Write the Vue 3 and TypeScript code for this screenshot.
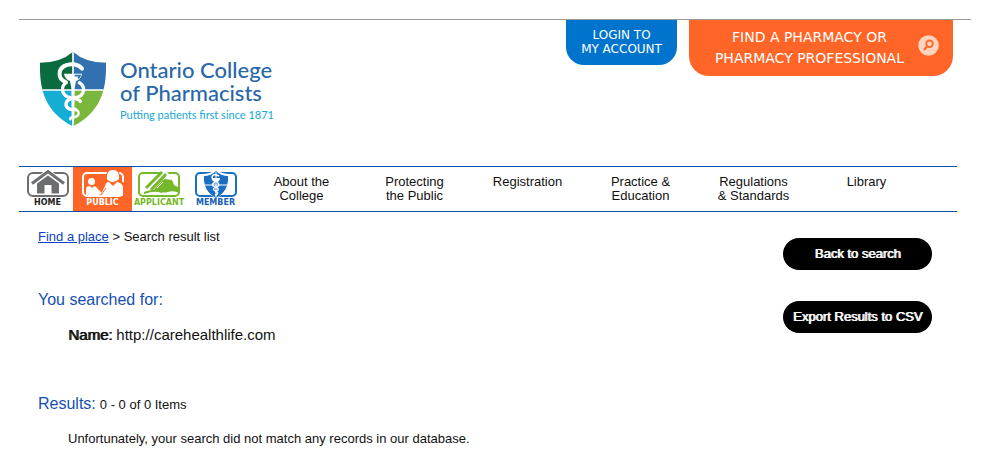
<script setup lang="ts">
interface NavLink {
  lines: string[]
}

const links: NavLink[] = [
  { lines: ['About the', 'College'] },
  { lines: ['Protecting', 'the Public'] },
  { lines: ['Registration'] },
  { lines: ['Practice &', 'Education'] },
  { lines: ['Regulations', '& Standards'] },
  { lines: ['Library'] },
]

const searchName = 'http://carehealthlife.com'
const resultRange = '0 - 0 of 0 Items'
</script>

<template>
  <div class="page">
    <header class="header">
      <a class="brand" href="#">
        <svg class="shield" viewBox="57 33 204 228" aria-hidden="true">
          <defs>
            <clipPath id="shield-shape">
              <path d="M159 35Q122 68 60 68C58 155 78 216 159 259C240 216 260 155 258 68Q196 68 159 35Z" />
            </clipPath>
          </defs>
          <g clip-path="url(#shield-shape)">
            <path fill="#0b6b40" d="M57 33h102v117H57z" />
            <path fill="#3271b0" d="M159 33h102v117H159z" />
            <path fill="#14aed5" d="M57 150h102v111H57z" />
            <path fill="#7ab73d" d="M159 150h102v111H159z" />
            <path stroke="#fff" stroke-width="5" d="M159 33v228M57 150h204" />
          </g>
          <path fill="#fff" d="M132 101H186Q184 118 168 123L164 144L163 238L159 246L155 238L154 144L150 123Q134 118 132 101Z" />
          <path fill="none" stroke="#3271b0" stroke-width="5" d="M164 107H180Q178 112 174 115" />
          <g fill="none" stroke="#fff" stroke-width="12" stroke-linecap="round">
            <path d="M186 86C176 72 154 70 141 75C112 84 112 116 137 126" />
            <path d="M178 128C197 138 194 165 173 171C158 176 138 176 138 193C138 207 154 210 166 208" stroke-width="10" />
            <path d="M139 128C122 138 124 163 144 171C156 176 178 176 181 184" stroke-width="10" />
            <path d="M166 210C182 212 177 229 164 231C152 232 149 234 151 238" stroke-width="7" />
          </g>
        </svg>
        <span class="brand-text">
          <span class="brand-name">
            <span>Ontario College</span>
            <span>of Pharmacists</span>
          </span>
          <span class="brand-tag">Putting patients first since 1871</span>
        </span>
      </a>
      <div class="tabs">
        <a class="tab login" href="#">LOGIN TO<br />MY ACCOUNT</a>
        <a class="tab find" href="#">
          <span>FIND A PHARMACY OR<br />PHARMACY PROFESSIONAL</span>
          <svg class="search" viewBox="0 0 21 21" aria-hidden="true">
            <circle cx="10.500" cy="10.500" r="10.300" fill="#ffd3be" />
            <circle cx="11.500" cy="8.800" r="3.300" fill="none" stroke="#ff6526" stroke-width="1.800" />
            <path d="M9 11.500L6 15" stroke="#ff6526" stroke-width="2.200" />
          </svg>
        </a>
      </div>
    </header>

    <nav class="nav">
      <a class="icon-link home" href="#">
        <svg viewBox="0 0 42 28" aria-hidden="true">
          <rect x="1" y="3" width="40" height="23" rx="5" fill="#fff" stroke="#6d6e70" stroke-width="2" />
          <path d="M3 13L21 -2L39 13V17H34V23H8V17H3Z" fill="#fff" />
          <path d="M5 13.500L21 1.500L37 13.500" fill="none" stroke="#6d6e70" stroke-width="3" />
          <path d="M10 13.500L21 5.500L32 13.500V23.500H24.500V15H17.500V23.500H10Z" fill="#6d6e70" />
        </svg>
        <span>HOME</span>
      </a>
      <a class="icon-link public" href="#">
        <svg viewBox="0 0 42 28" aria-hidden="true">
          <rect x="1" y="3" width="40" height="23" rx="4" fill="none" stroke="#fff" stroke-width="2" />
          <path d="M24 10Q23 0 29 -1Q39 -2 38 10L42 13V26H18Z" fill="#ff6526" />
          <circle cx="9.500" cy="11.500" r="3.500" fill="#fff" />
          <path d="M4 25V19Q4 16 8 16L10 18L12 16Q14 16 15 18L20 23L17 25Z" fill="#fff" />
          <path d="M25 9Q24 0 31 0Q38 0 37 9Q34 12 31 12Q27 12 25 9Z" fill="#fff" />
          <path d="M18 26L23 16Q24 12 27 12L31 16L35 12Q41 13 41 18V26Z" fill="#fff" />
          <path d="M24 18L19 25" stroke="#ff6526" stroke-width="1" />
        </svg>
        <span>PUBLIC</span>
      </a>
      <a class="icon-link applicant" href="#">
        <svg viewBox="0 0 42 28" aria-hidden="true">
          <rect x="1" y="3" width="40" height="23" rx="4" fill="#fff" stroke="#75b82a" stroke-width="2" />
          <path d="M19 12L27 9L34 10L36 15L42 18V23Q35 20 30 22Q23 24 14 19Z" fill="#75b82a" />
          <path d="M6 21L25 1L31 3L14 22Z" fill="#fff" />
          <path d="M8 18L24 2M13 20L28 4" stroke="#75b82a" stroke-width="3" />
          <path d="M6 23Q17 19 24 22" fill="none" stroke="#75b82a" stroke-width="2" />
          <path d="M19 18L25 12" stroke="#fff" stroke-width="1" />
        </svg>
        <span>APPLICANT</span>
      </a>
      <a class="icon-link member" href="#">
        <svg viewBox="0 0 42 28" aria-hidden="true">
          <rect x="1" y="3" width="40" height="23" rx="4" fill="#fff" stroke="#1b6ec2" stroke-width="2" />
          <path d="M21 0Q15 4 7 4Q6 22 21 28Q36 22 35 4Q27 4 21 0Z" fill="#fff" />
          <path d="M21 1Q16 6 9 6Q8 21 21 28Q34 21 33 6Q26 6 21 1Z" fill="#1b6ec2" />
          <path d="M21 2V27M9 15H33" stroke="#fff" stroke-width="1" />
          <path d="M17 8H25Q25 12 21 12Q17 12 17 8Z" fill="#fff" />
          <path d="M24 6Q18 3 17 7Q17 10 22 12Q26 15 22 17Q17 18 19 20L22 22Q24 24 20 25M20 12Q15 15 20 17Q24 18 23 20L20 22" fill="none" stroke="#fff" stroke-width="1.500" />
        </svg>
        <span>MEMBER</span>
      </a>
      <a v-for="link in links" :key="link.lines[0]" class="nav-link" href="#">
        <span v-for="line in link.lines" :key="line">{{ line }}</span>
      </a>
    </nav>

    <div class="content">
      <main class="main">
        <p class="crumbs"><a href="#">Find a place</a> &gt; Search result list</p>
        <h2 class="heading searched">You searched for:</h2>
        <p class="criteria"><strong>Name:</strong> {{ searchName }}</p>
        <div class="results">
          <h2 class="heading">Results:</h2>
          <span>{{ resultRange }}</span>
        </div>
        <p class="message">Unfortunately, your search did not match any records in our database.</p>
      </main>
      <aside class="actions">
        <button type="button">Back to search</button>
        <button type="button">Export Results to CSV</button>
      </aside>
    </div>
  </div>
</template>

<style>
body {
  background: #fff;
}
</style>

<style scoped>
.page {
  padding: 19px 19px 0;
  font-family: "Liberation Sans", Arial, sans-serif;
  font-size: 13px;
  line-height: 16px;
  color: #111;
}
a {
  color: inherit;
  text-decoration: none;
}
p,
h2 {
  margin: 0;
}
.header {
  display: flex;
  justify-content: space-between;
  align-items: flex-start;
  min-height: 146px;
  padding: 0 18px 0 20px;
  border-top: 1px solid #999;
}
.brand {
  display: flex;
  gap: 13px;
  padding-top: 31px;
}
.shield {
  width: 68px;
  height: 76px;
}
.brand-text {
  display: flex;
  flex-direction: column;
  gap: 3px;
  padding-top: 7px;
  white-space: nowrap;
}
.brand-name {
  display: flex;
  flex-direction: column;
  font-family: Lato, sans-serif;
  font-size: 22px;
  font-weight: 500;
  line-height: 23px;
  color: #2867a8;
}
.brand-tag {
  font-family: Lato, sans-serif;
  font-size: 11px;
  line-height: 16px;
  color: #17a9ce;
}
.tabs {
  display: flex;
  align-items: flex-start;
  gap: 12px;
}
.tab {
  font-family: "DejaVu Sans", Verdana, sans-serif;
  color: #fff;
  text-align: center;
  white-space: nowrap;
}
.login {
  padding: 8px 15px 9px;
  border-radius: 0 0 18px 18px;
  background: #0074cc;
  font-size: 12px;
  line-height: 14px;
}
.find {
  display: flex;
  align-items: center;
  gap: 14px;
  padding: 7px 14px 7px 26px;
  border-radius: 0 0 20px 20px;
  background: #ff6526;
  font-size: 14px;
  line-height: 21px;
}
.search {
  width: 21px;
  height: 21px;
  margin-bottom: 6px;
}
.nav {
  display: flex;
  margin-right: 14px;
  border: solid #0b4fae;
  border-width: 1px 0;
}
.icon-link {
  display: flex;
  flex: none;
  flex-direction: column;
  align-items: center;
  box-sizing: border-box;
  height: 44px;
  padding-top: 3px;
  font-family: "DejaVu Sans", Verdana, sans-serif;
  font-size: 8px;
  font-weight: bold;
  line-height: 10px;
}
.icon-link svg {
  width: 42px;
  height: 28px;
  overflow: visible;
}
.home {
  width: 54px;
  padding-left: 3px;
  color: #222;
}
.public {
  width: 59px;
  background: #ff6526;
  color: #fff;
}
.applicant {
  width: 54px;
  color: #75b82a;
}
.member {
  width: 59px;
  color: #1760b4;
}
.nav-link {
  display: flex;
  flex: 0 1 113px;
  flex-direction: column;
  align-items: center;
  padding-top: 8px;
  line-height: 14px;
  white-space: nowrap;
}
.content {
  display: flex;
  justify-content: space-between;
  margin-right: 14px;
  padding: 17px 25px 0 19px;
}
.crumbs a {
  color: #0b3fbf;
  text-decoration: underline;
}
.heading {
  font-size: 16px;
  font-weight: normal;
  line-height: 20px;
  color: #1450b4;
}
.searched {
  margin-top: 45px;
}
.criteria {
  margin: 16px 0 0 30px;
  font-size: 15px;
  line-height: 18px;
}
.criteria strong {
  font-weight: normal;
  text-shadow: 1px 0 0 currentColor;
}
.results {
  display: flex;
  align-items: baseline;
  gap: 4px;
  margin-top: 50px;
}
.message {
  margin: 17px 0 0 30px;
}
.actions {
  display: flex;
  flex: none;
  flex-direction: column;
  gap: 31px;
  width: 149px;
  padding-top: 9px;
}
.actions button {
  height: 32px;
  padding: 0;
  border: 0;
  border-radius: 16px;
  background: #000;
  color: #fff;
  font: inherit;
  text-shadow: 1px 0 0 #fff;
  white-space: nowrap;
}
</style>
